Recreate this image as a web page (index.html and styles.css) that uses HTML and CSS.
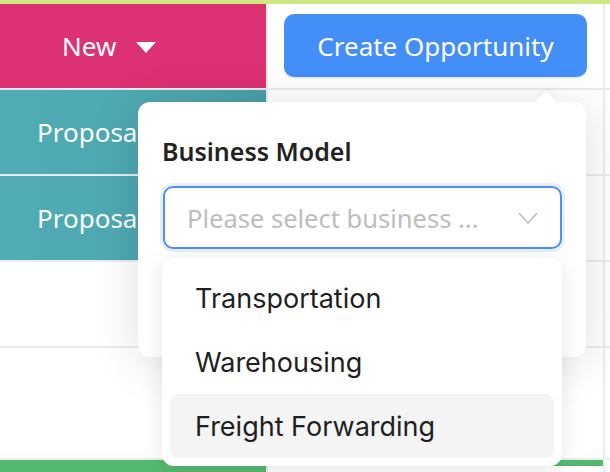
FILE: index.html
```html
<!DOCTYPE html>
<html>
<head>
  <title>Opportunities</title>
  <link rel="stylesheet" href="styles.css">
</head>
<body>
  <div class="page">
    <div class="topline"></div>

    <div class="board">
      <div class="stage stage-new">
        <span>New</span>
        <span class="caret"></span>
      </div>
      <div class="cell cell-action">
        <button class="btn-primary">Create Opportunity</button>
      </div>
      <div class="cell"></div>

      <div class="stage stage-proposal">
        <span>Proposal</span>
      </div>
      <div class="cell"></div>
      <div class="cell"></div>

      <div class="stage stage-proposal">
        <span>Proposal</span>
      </div>
      <div class="cell"></div>
      <div class="cell"></div>

      <div class="cell"></div>
      <div class="cell"></div>
      <div class="cell"></div>

      <div class="cell"></div>
      <div class="cell"></div>
      <div class="cell"></div>

      <div class="stage stage-won"></div>
      <div class="cell cell-won"></div>
      <div class="cell"></div>
    </div>

    <!-- popover opened from "Create Opportunity" -->
    <div class="popover">
      <div class="popover-arrow"></div>
      <div class="popover-title">Business Model</div>

      <div class="select-wrap">
        <div class="select">
          <span class="placeholder">Please select business ...</span>
          <svg class="chevron" width="20" height="12" viewBox="0 0 20 12">
            <polyline points="1,1 10,11 19,1" fill="none" stroke="#bdbdbd" stroke-width="1.6"></polyline>
          </svg>
        </div>

        <ul class="dropdown">
          <li class="option">Transportation</li>
          <li class="option">Warehousing</li>
          <li class="option active">Freight Forwarding</li>
        </ul>
      </div>
    </div>
  </div>
</body>
</html>
```

FILE: styles.css
```css
body {
  margin: 0;
  background-color: #fff;
  font-family: 'Noto Sans', 'Open Sans', sans-serif;
  color: #222;
  overflow: hidden;
}

.page {
  position: relative;
  width: 610px;
  height: 472px;
}

.topline {
  height: 4px;
  background-color: #cde882;
}

/* Board grid: gaps show as grid lines */
.board {
  display: grid;
  grid-template-columns: 266px 335px 1fr;
  grid-template-rows: 84px 84px 84px 84px 110px 12px;
  gap: 2px;
  background-color: #ececec;
}

.cell {
  background-color: #fff;
}

.stage {
  display: flex;
  align-items: center;
  color: #fff;
  font-size: 26px;
}

.stage-new {
  background-color: #dc3172;
  padding-left: 62px;
  gap: 20px;
}

.stage-proposal {
  background: linear-gradient(90deg, #50abb4 0%, #4ea7b1 70%, #4a9ea8 100%);
  padding-left: 37px;
}

.stage-won {
  background-color: #55b870;
}

.cell-won {
  border-top: 6px solid #55b870;
}

.caret {
  width: 0;
  height: 0;
  border-left: 10px solid transparent;
  border-right: 10px solid transparent;
  border-top: 11px solid #fff;
  margin-top: 2px;
}

.cell-action {
  display: flex;
  align-items: center;
  justify-content: center;
}

.btn-primary {
  width: 303px;
  height: 63px;
  margin-top: -1px;
  border: none;
  border-radius: 10px;
  background-color: #448ef7;
  color: #fff;
  font-family: 'Noto Sans', 'Open Sans', sans-serif;
  font-size: 26px;
  box-shadow: 0 2px 0 rgba(68, 142, 247, 0.12);
  cursor: pointer;
}

/* Popover */
.popover {
  position: absolute;
  left: 138px;
  top: 102px;
  width: 448px;
  height: 255px;
  box-sizing: border-box;
  padding: 33px 24px 0 25px;
  background-color: #fff;
  border-radius: 12px;
  box-shadow: 0 6px 48px rgba(0, 0, 0, 0.13);
}

.popover-arrow {
  position: absolute;
  left: 400px;
  top: -8px;
  width: 16px;
  height: 16px;
  background-color: #fff;
  transform: rotate(45deg);
  border-top-left-radius: 3px;
  box-shadow: -3px -3px 8px rgba(0, 0, 0, 0.04);
}

.popover-title {
  margin-left: -1px;
  font-size: 25px;
  font-weight: 600;
  line-height: 32px;
  color: #222;
}

.select-wrap {
  position: relative;
  margin-top: 19px;
}

.select {
  display: flex;
  align-items: center;
  justify-content: space-between;
  height: 63px;
  box-sizing: border-box;
  padding: 0 22px 0 22px;
  border: 2px solid #4f8ff5;
  border-radius: 10px;
  box-shadow: 0 0 0 3px #e7effd;
}

.placeholder {
  font-size: 25.5px;
  color: #bdbdbd;
}

.chevron {
  margin-top: 1px;
}

.dropdown {
  position: absolute;
  left: -1px;
  top: 72px;
  width: 400px;
  margin: 0;
  padding: 8px;
  box-sizing: border-box;
  list-style: none;
  background-color: #fff;
  border-radius: 12px;
  box-shadow: 0 4px 22px rgba(0, 0, 0, 0.1);
  font-family: Inter, 'Noto Sans', sans-serif;
}

.option {
  height: 64px;
  display: flex;
  align-items: center;
  padding-left: 25px;
  border-radius: 8px;
  font-size: 27px;
  color: #1f1f1f;
}

.option.active {
  background-color: #f4f4f4;
}
```
